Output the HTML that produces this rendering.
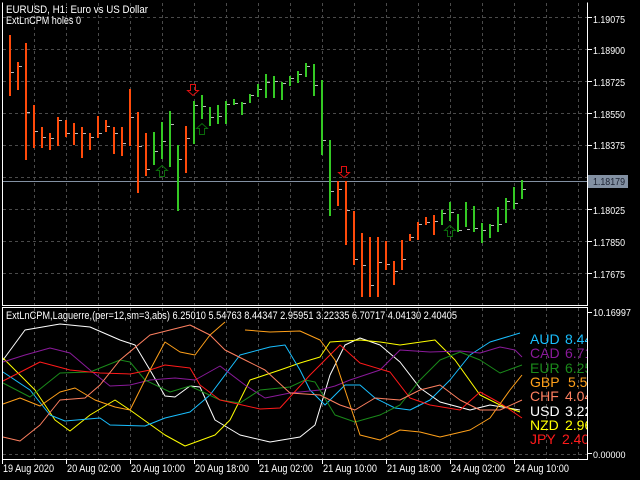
<!DOCTYPE html>
<html><head><meta charset="utf-8"><style>
html,body{margin:0;padding:0;background:#000;width:640px;height:480px;overflow:hidden}
svg{display:block}
text{font-family:"Liberation Sans",sans-serif}
</style></head><body>
<svg width="640" height="480" viewBox="0 0 640 480" xmlns="http://www.w3.org/2000/svg">
<rect width="640" height="480" fill="#000"/>
<g stroke="#4a4a4a" stroke-width="1" stroke-dasharray="3,3" fill="none">
<path d="M3 17.5H587M3 49.5H587M3 81.5H587M3 113.5H587M3 145.5H587M3 177.5H587M3 209.5H587M3 241.5H587M3 273.5H587"/>
<path d="M34.5 3V305M66.5 3V305M98.5 3V305M130.5 3V305M162.5 3V305M194.5 3V305M226.5 3V305M258.5 3V305M290.5 3V305M322.5 3V305M354.5 3V305M386.5 3V305M418.5 3V305M450.5 3V305M482.5 3V305M514.5 3V305M546.5 3V305M578.5 3V305"/>
<path d="M34.5 308V459M66.5 308V459M98.5 308V459M130.5 308V459M162.5 308V459M194.5 308V459M226.5 308V459M258.5 308V459M290.5 308V459M322.5 308V459M354.5 308V459M386.5 308V459M418.5 308V459M450.5 308V459M482.5 308V459M514.5 308V459M546.5 308V459M578.5 308V459M3 454.5H587"/>
</g>
<path d="M3 181.5H587" stroke="#8391a3" stroke-width="1"/>
<path fill="none" stroke="#ff4a0a" stroke-width="2" d="M10 35V96M18 62V90M26 43V160M34 105V148M42 127V148M50 133V150M58 117V146M66 120V137M74 123V145M82 127V158M90 133V150M98 116V138M106 120V132M114 127V154M122 127V156M130 89V146M138 112V193M146 133V176M186 126V173M338 181V206M346 181V245M354 211V265M362 233V297M370 237V297M378 237V297M386 241V270M394 261V285M402 240V270M410 234V241M418 222V240M426 217V225M434 215V235"/>
<path fill="none" stroke="#34c924" stroke-width="2" d="M154 132V165M162 122V159M170 111V167M178 145V211M194 101V144M202 95V119M210 107V126M218 105V124M226 101V124M234 99V105M242 102V115M250 94V103M258 84V97M266 74V98M274 76V98M282 82V100M290 76V86M298 71V83M306 63V77M314 64V96M322 80V155M330 140V216M442 210V225M450 202V221M458 214V232M466 202V227M474 206V232M482 223V243M490 224V238M498 207V232M506 198V223M514 187V209M522 180V199"/>
<path fill="none" stroke="#bbb" stroke-width="1" d="M11 72.5h3M19 66.5h3M27 112.5h3M35 131.5h3M43 137.5h3M51 138.5h3M59 120.5h3M67 133.5h3M75 133.5h3M83 133.5h3M91 137.5h3M99 133.5h3M107 126.5h3M115 133.5h3M123 143.5h3M131 117.5h3M139 146.5h3M147 169.5h3M155 151.5h3M163 141.5h3M171 124.5h3M179 159.5h3M187 138.5h3M195 105.5h3M203 106.5h3M211 117.5h3M219 116.5h3M227 104.5h3M235 103.5h3M243 103.5h3M251 95.5h3M259 89.5h3M267 82.5h3M275 81.5h3M283 83.5h3M291 78.5h3M299 74.5h3M307 66.5h3M315 85.5h3M323 140.5h3M331 191.5h3M339 189.5h3M347 210.5h3M355 259.5h3M363 265.5h3M371 285.5h3M379 262.5h3M387 264.5h3M395 271.5h3M403 259.5h3M411 237.5h3M419 224.5h3M427 222.5h3M435 221.5h3M443 213.5h3M451 212.5h3M459 230.5h3M467 229.5h3M475 228.5h3M483 230.5h3M491 225.5h3M499 224.5h3M507 201.5h3M515 203.5h3M523 189.5h3"/>
<g fill="none" stroke-width="1">
<path stroke="#e01010" d="M190.5 84.5h5v6h3l-5.5 5-5.5-5h3z"/>
<path stroke="#e01010" d="M341.5 166.5h5v6h3l-5.5 5-5.5-5h3z"/>
<path stroke="#0a6a0a" d="M159.5 176.5h5v-6h3l-5.5-5-5.5 5h3z"/>
<path stroke="#0a6a0a" d="M199.5 134.5h5v-6h3l-5.5-5-5.5 5h3z"/>
<path stroke="#0a6a0a" d="M447.5 236.5h5v-6h3l-5.5-5-5.5 5h3z"/>
</g>
<g fill="none" stroke-width="1" stroke-linejoin="round">
<polyline stroke="#ffffff" points="3,360 25,330 60,324 90,327 120,340 135,345 150,370 165,396 175,397 190,386 200,387 215,420 240,435 270,442 300,437 315,425 330,375 345,345 360,338 380,345 400,362 420,388 440,402 470,410 490,405 520,410"/>
<polyline stroke="#ffff00" points="3,358 35,390 55,420 70,431 90,415 115,400 130,410 165,435 185,446 215,435 230,420 250,380 280,370 300,363 320,357 330,342 360,340 380,342 400,345 435,340 455,360 480,395 500,405 520,412"/>
<polyline stroke="#19bfff" points="3,372 30,390 50,415 65,421 100,418 110,425 145,426 165,418 190,412 210,395 240,355 270,347 285,345 300,370 310,390 325,405 345,385 360,385 375,398 395,408 410,410 430,400 450,380 470,355 490,342 520,333"/>
<polyline stroke="#8a1a9a" points="3,362 25,355 50,348 70,353 90,370 110,386 130,385 150,380 175,378 195,380 220,366 245,385 265,398 290,393 320,390 335,386 350,380 380,370 400,350 430,352 460,351 480,353 500,347 515,350 522,357"/>
<polyline stroke="#1a8a1a" points="3,383 30,397 60,373 90,372 120,360 130,362 145,380 170,392 190,386 220,400 240,403 260,390 290,387 305,380 315,382 335,415 355,422 380,415 400,405 420,380 440,360 460,352 480,360 500,373 522,365"/>
<polyline stroke="#ff1a1a" points="3,381 40,362 70,370 100,373 130,374 150,370 165,365 190,368 200,385 220,400 260,409 280,408 310,375 340,345 360,363 390,372 410,398 430,405 460,410 480,392 500,403 522,418"/>
<polyline stroke="#ffa01a" points="3,404 20,398 40,406 60,392 75,388 95,400 115,407 130,410 150,370 165,342 180,352 195,355 210,335 225,322"/>
<polyline stroke="#ffa01a" points="245,330 270,332 300,331 320,340 335,360 345,390 360,435 380,440 400,430 420,432 440,437 470,430 490,418 510,390 522,375"/>
<polyline stroke="#ff8060" points="3,437 20,441 40,425 60,400 85,398 100,385 120,360 150,335 190,325 210,335 225,350 245,360 265,370 290,393 320,395 340,405 355,410 375,398 400,400 420,390 440,385 460,400 480,410 500,410 522,400"/>
</g>
<g fill="none" stroke="#fff" stroke-width="1">
<path d="M2.5 2.5V305.5H587.5V2.5"/>
<path d="M2.5 307.5H587.5V459.5H2.5Z"/>
<path d="M588 17.5h4M588 49.5h4M588 81.5h4M588 113.5h4M588 145.5h4M588 209.5h4M588 241.5h4M588 273.5h4M588 312.5h4M588 453.5h4"/>
<path d="M2.5 460v4M66.5 460v4M130.5 460v4M194.5 460v4M258.5 460v4M322.5 460v4M386.5 460v4M450.5 460v4M514.5 460v4"/>
</g>
<rect x="588" y="175" width="40" height="13" fill="#8391a3"/>
<g fill="#fff" font-size="10.5">
<text x="593" y="23" textLength="32" lengthAdjust="spacingAndGlyphs">1.19075</text>
<text x="593" y="54" textLength="32" lengthAdjust="spacingAndGlyphs">1.18900</text>
<text x="593" y="86" textLength="32" lengthAdjust="spacingAndGlyphs">1.18725</text>
<text x="593" y="118" textLength="32" lengthAdjust="spacingAndGlyphs">1.18550</text>
<text x="593" y="149" textLength="32" lengthAdjust="spacingAndGlyphs">1.18375</text>
<text x="593" y="214" textLength="32" lengthAdjust="spacingAndGlyphs">1.18025</text>
<text x="593" y="246" textLength="32" lengthAdjust="spacingAndGlyphs">1.17850</text>
<text x="593" y="278" textLength="32" lengthAdjust="spacingAndGlyphs">1.17675</text>
<text x="593" y="316" textLength="38" lengthAdjust="spacingAndGlyphs">10.16997</text>
<text x="593" y="458" font-size="9">0.00000</text>
</g>
<text x="593" y="185" fill="#1a2030" font-size="10.5" textLength="32" lengthAdjust="spacingAndGlyphs">1.18179</text>
<g fill="#fff" font-size="11" lengthAdjust="spacingAndGlyphs">
<text x="6" y="13" textLength="142" lengthAdjust="spacingAndGlyphs">EURUSD, H1:  Euro vs US Dollar</text>
<text x="6" y="24" textLength="75" lengthAdjust="spacingAndGlyphs">ExtLnCPM holes 0</text>
<text x="6" y="319" textLength="451" lengthAdjust="spacingAndGlyphs">ExtLnCPM,Laguerre,(per=12,sm=3,abs) 6.25010 5.54763 8.44347 2.95951 3.22335 6.70717 4.04130 2.40405</text>
<text x="3" y="472" textLength="51" lengthAdjust="spacingAndGlyphs">19 Aug 2020</text>
<text x="67" y="472" textLength="54" lengthAdjust="spacingAndGlyphs">20 Aug 02:00</text>
<text x="131" y="472" textLength="54" lengthAdjust="spacingAndGlyphs">20 Aug 10:00</text>
<text x="195" y="472" textLength="54" lengthAdjust="spacingAndGlyphs">20 Aug 18:00</text>
<text x="259" y="472" textLength="54" lengthAdjust="spacingAndGlyphs">21 Aug 02:00</text>
<text x="323" y="472" textLength="54" lengthAdjust="spacingAndGlyphs">21 Aug 10:00</text>
<text x="387" y="472" textLength="54" lengthAdjust="spacingAndGlyphs">21 Aug 18:00</text>
<text x="451" y="472" textLength="54" lengthAdjust="spacingAndGlyphs">24 Aug 02:00</text>
<text x="515" y="472" textLength="54" lengthAdjust="spacingAndGlyphs">24 Aug 10:00</text>
</g>
<svg x="0" y="0" width="587" height="459">
<g font-size="14">
<text x="530" y="344" fill="#19bfff">AUD</text><text x="565" y="344" fill="#19bfff">8.44</text>
<text x="530" y="358" fill="#8a1a9a">CAD</text><text x="565" y="358" fill="#8a1a9a">6.71</text>
<text x="530" y="373" fill="#1a8a1a">EUR</text><text x="565" y="373" fill="#1a8a1a">6.25</text>
<text x="530" y="387" fill="#ffa01a">GBP</text><text x="568" y="387" fill="#ffa01a">5.55</text>
<text x="530" y="401" fill="#ff8060">CHF</text><text x="565" y="401" fill="#ff8060">4.04</text>
<text x="530" y="416" fill="#ffffff">USD</text><text x="565" y="416" fill="#ffffff">3.22</text>
<text x="530" y="430" fill="#ffff00">NZD</text><text x="565" y="430" fill="#ffff00">2.96</text>
<text x="530" y="444" fill="#ff1a1a">JPY</text><text x="562" y="444" fill="#ff1a1a">2.40</text>
</g>
</svg>
</svg>
</body></html>
